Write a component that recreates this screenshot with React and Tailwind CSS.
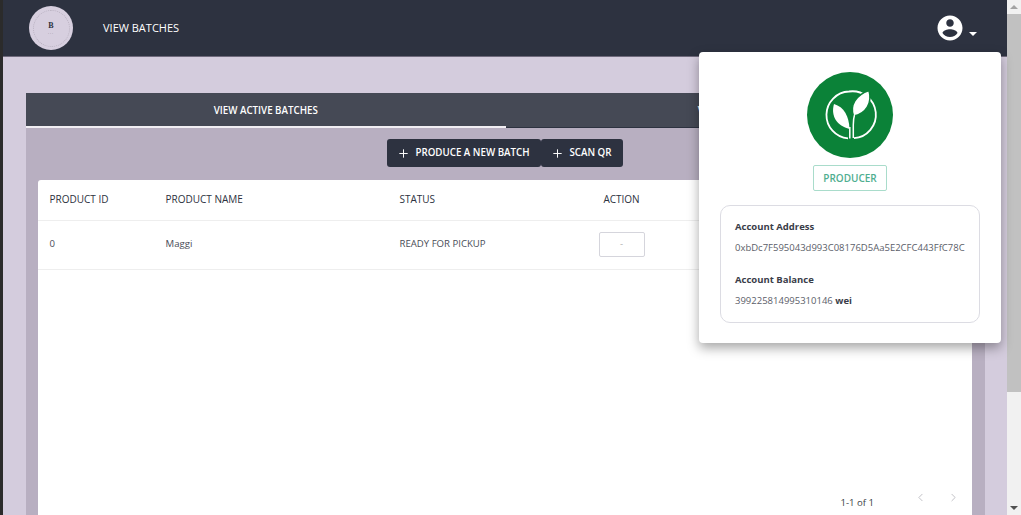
import { Plus, ChevronLeft, ChevronRight } from "lucide-react";

function AccountIcon() {
  return (
    <svg viewBox="0 0 24 24" className="w-[30px] h-[30px]" fill="#fff">
      <path d="M12 2C6.48 2 2 6.48 2 12s4.48 10 10 10 10-4.48 10-10S17.52 2 12 2zm0 3c1.66 0 3 1.34 3 3s-1.34 3-3 3-3-1.34-3-3 1.34-3 3-3zm0 14.2c-2.5 0-4.71-1.28-6-3.22.03-1.99 4-3.08 6-3.08 1.99 0 5.97 1.09 6 3.08-1.29 1.94-3.5 3.22-6 3.22z" />
    </svg>
  );
}

function Logo() {
  return (
    <div className="w-[44px] h-[44px] rounded-full bg-[#d7cfdf] flex items-center justify-center">
      <div className="w-[37px] h-[37px] rounded-full border border-dotted border-[#b9b1c0] flex flex-col items-center justify-center">
        <span className="text-[8px] leading-[9px] font-bold text-[#2d3240] font-['Liberation_Serif',serif]">B</span>
        <span className="text-[4px] leading-[5px] tracking-[1px] text-[#6d6875]">...</span>
      </div>
    </div>
  );
}

function ProducerBadge() {
  return (
    <svg viewBox="0 0 86 86" className="w-[86px] h-[86px]">
      <circle cx="43" cy="43" r="43" fill="#0b8238" />
      <path d="M47 66.200 A23.500 23.500 0 1 0 42 19.500 A23.500 23.500 0 0 0 41 66.400" fill="none" stroke="#fff" strokeWidth="1.800" />
      <path d="M42.500 57 C42 44 37 35 27 32 C23.500 44 30 54 42.500 57 Z" fill="#fff" />
      <path d="M46.500 44 C42.500 33 49 23 62 18.500 C65.500 31 59 42 46.500 44 Z" fill="#fff" stroke="#0b8238" strokeWidth="1.500" />
      <path d="M42.800 66.500 L42.800 55" fill="none" stroke="#fff" strokeWidth="1.500" />
      <path d="M46.300 66 L46.300 53 C46.300 49 46.500 46 47.500 43" fill="none" stroke="#fff" strokeWidth="1.500" />
    </svg>
  );
}

export default function App() {
  return (
    <div className="flex h-screen overflow-hidden bg-[#d4ccdd] font-['Open_Sans',sans-serif] relative">
      <div className="w-[3px] shrink-0 bg-[#2b2b2b]" />

      <div className="flex-1 min-w-0 flex flex-col">
        <header className="h-[57px] shrink-0 bg-[#2d3240] flex items-center pl-[26px] pr-[30px] border-b border-[#6f6a7c]">
          <Logo />
          <span className="ml-[30px] text-[11px] text-white">VIEW BATCHES</span>
          <div className="ml-auto flex items-center">
            <AccountIcon />
            <span className="ml-[4px] mt-[12px] w-0 h-0 border-x-[4px] border-x-transparent border-t-[4px] border-t-white" />
          </div>
        </header>

        <main className="flex-1 min-h-0 pt-[36px] pl-[23px] pr-[22px]">
          <div className="h-full flex flex-col bg-[#b8afc1]">
            <div className="h-[35px] shrink-0 grid grid-cols-2 bg-[#454955] text-[9.75px] font-semibold text-white text-center">
              <div className="flex items-center justify-center pt-[3px] border-b-2 border-[#f1eef3]">VIEW ACTIVE BATCHES</div>
              <div className="flex items-center justify-center pt-[3px] border-b border-[#2d3240]">VIEW PAST BATCHES</div>
            </div>

            <div className="flex justify-center pt-[11px] pb-[13px] pr-[2px]">
              <button className="h-[28px] w-[154px] flex items-center justify-center gap-[5px] rounded-[3px] bg-[#2d3240] text-white text-[9.75px] leading-[12px] font-semibold">
                <Plus size={13} strokeWidth={1.800} />
                PRODUCE A NEW BATCH
              </button>
              <button className="h-[28px] w-[82px] flex items-center justify-center gap-[5px] rounded-[3px] bg-[#2d3240] text-white text-[9.75px] leading-[12px] font-semibold">
                <Plus size={13} strokeWidth={1.800} />
                SCAN QR
              </button>
            </div>

            <div className="flex-1 mx-[12px] mr-[13px] bg-white rounded-t-[3px] flex flex-col text-[9.6px] text-[#4a4d57]">
              <div className="h-[41px] shrink-0 grid grid-cols-[116px_234px_187px_70px] pl-[11.500px] pb-[1px] items-center border-b border-[#eeeeee] text-[10px] font-medium text-[#2d3240]">
                <span>PRODUCT ID</span>
                <span>PRODUCT NAME</span>
                <span>STATUS</span>
                <span className="text-center">ACTION</span>
              </div>
              <div className="h-[49px] shrink-0 grid grid-cols-[116px_234px_187px_70px] pl-[11.500px] pb-[1px] items-center border-b border-[#eeeeee]">
                <span>0</span>
                <span>Maggi</span>
                <span>READY FOR PICKUP</span>
                <span className="flex justify-center">
                  <span className="w-[46px] h-[25px] flex items-center justify-center rounded-[2px] border border-[#d5d5dc] text-[#b0b0b0]">-</span>
                </span>
              </div>
              <div className="flex-1" />
              <div className="flex items-start justify-end h-[24px] shrink-0 pr-[12px]">
                <span className="mt-[5px] text-[#3c3f49]">1-1 of 1</span>
                <ChevronLeft size={13} strokeWidth={1.500} className="ml-[40px] text-[#b4b4ba]" />
                <ChevronRight size={13} strokeWidth={1.500} className="ml-[20px] text-[#b4b4ba]" />
              </div>
            </div>
          </div>
        </main>
      </div>

      <div className="w-[14px] shrink-0 flex flex-col items-center bg-[#f1f1f1]">
        <div className="h-[14px] w-full flex items-center justify-center">
          <span className="w-0 h-0 border-x-[4px] border-x-transparent border-b-[4px] border-b-[#a3a3a3]" />
        </div>
        <div className="w-full h-[378px] bg-[#c1c1c1]" />
        <div className="mt-auto h-[14px] w-full flex items-center justify-center">
          <span className="w-0 h-0 border-x-[4px] border-x-transparent border-t-[4px] border-t-[#505050]" />
        </div>
      </div>

      <div className="absolute left-[699px] top-[52px] w-[302px] h-[291px] bg-white rounded-[4px] shadow-[0_5px_12px_rgba(0,0,0,0.35)] flex flex-col items-center pt-[20px]">
        <ProducerBadge />
        <div className="mt-[7px] w-[74px] h-[26px] flex items-center justify-center rounded-[2px] border border-[#a9dccb] text-[10px] font-semibold text-[#4fae90]">PRODUCER</div>
        <div className="mt-[14px] w-[260px] h-[118px] rounded-[10px] border border-[#dcdce3] px-[14px] pt-[14px] text-[9.5px] text-[#5b5e69]">
          <p className="font-bold text-[#3a3d49] leading-[14px]">Account Address</p>
          <p className="mt-[7px] leading-[14px] whitespace-nowrap">0xbDc7F595043d993C08176D5Aa5E2CFC443FfC78C</p>
          <p className="mt-[18px] font-bold text-[#3a3d49] leading-[14px]">Account Balance</p>
          <p className="mt-[7px] leading-[14px]">399225814995310146 <span className="font-bold text-[#3a3d49]">wei</span></p>
        </div>
      </div>
    </div>
  );
}
